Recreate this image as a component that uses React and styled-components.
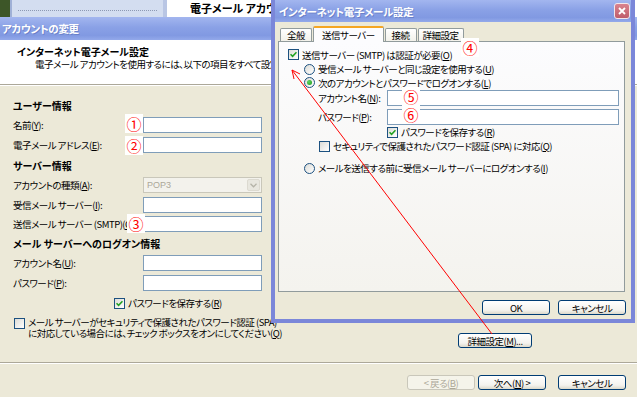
import React from "react";
import styled, { createGlobalStyle, css } from "styled-components";

const GlobalStyle = createGlobalStyle`
  html, body { margin: 0; padding: 0; }
  body {
    width: 637px;
    height: 397px;
    overflow: hidden;
    background: #3d5628;
    font-family: "Noto Sans CJK JP", "Liberation Sans", sans-serif;
    font-size: 9.5px;
    letter-spacing: -0.5px;
    font-feature-settings: "palt";
    color: #000;
  }
`;

const Desktop = styled.div`
  position: relative;
  width: 637px;
  height: 397px;
  overflow: hidden;
`;

/* window behind everything (top strip) */
const BackWindow = styled.div`
  position: absolute;
  left: 10px;
  top: 0;
  width: 627px;
  height: 30px;
  display: flex;
  background: #fff;
`;
const NavPane = styled.div`
  width: 157px;
  border-left: 2px solid #9fb0d6;
  border-right: 4px solid #b9c6e4;
  background: #d3ddf0;
  padding: 10px 6px 0 6px;
  box-sizing: border-box;
`;
const Dotted = styled.div`
  border-top: 1px dotted #8d99b3;
`;
const BackHeading = styled.div`
  padding: 2px 0 0 23px;
  font-weight: bold;
  font-size: 11px;
  letter-spacing: 0;
  line-height: 13px;
`;

/* main wizard */
const MainWindow = styled.div`
  position: absolute;
  left: 0;
  top: 17px;
  width: 637px;
  height: 380px;
  background: #ece9d8;
  display: flex;
  flex-direction: column;
`;
const TitleBar = styled.div`
  flex: none;
  height: ${p => p.$h}px;
  display: flex;
  align-items: center;
  justify-content: space-between;
  padding: 0 1px 0 ${p => p.$pl}px;
  box-sizing: border-box;
  background: linear-gradient(#a3b6ef, #8aa1e6 45%, #8199e2 80%, #93a9ea);
  color: #fff;
  font-weight: bold;
  font-size: 10.5px;
  letter-spacing: -0.3px;
  text-shadow: 1px 1px 0 rgba(60, 80, 150, 0.35);
`;
const WizardHeader = styled.div`
  flex: none;
  height: 45px;
  background: #fff;
  border-bottom: 1px solid #aca899;
  box-shadow: 0 1px 0 #fff;
  padding: 5px 0 0 17px;
  box-sizing: border-box;
`;
const HeaderTitle = styled.div`
  font-weight: bold;
  font-size: 10px;
  letter-spacing: 0;
  line-height: 13px;
`;
const HeaderText = styled.div`
  padding-left: 18px;
  line-height: 12px;
  white-space: nowrap;
`;
const WizardBody = styled.div`
  flex: 1;
  display: flex;
  margin-top: 1px;
`;
const FormCol = styled.div`
  width: 266px;
  flex: none;
  padding: 9px 0 0 13px;
  box-sizing: border-box;
  display: grid;
  grid-template-columns: 130px 119px;
  align-content: start;
`;
const Heading = styled.div`
  grid-column: 1 / 3;
  height: 20px;
  display: flex;
  align-items: center;
  font-weight: bold;
  font-size: 10px;
  letter-spacing: 0;
`;
const Label = styled.div`
  height: ${p => p.$h || 20}px;
  display: flex;
  align-items: center;
  white-space: nowrap;
`;
const Cell = styled.div`
  height: ${p => p.$h || 20}px;
  display: flex;
  align-items: center;
`;
const TextBox = styled.div`
  width: ${p => p.$w}px;
  height: 16px;
  box-sizing: border-box;
  border: 1px solid #7f9db9;
  background: #fff;
`;
const Combo = styled.div`
  width: 119px;
  height: 16px;
  box-sizing: border-box;
  border: 1px solid #c9c7ba;
  background: #f3f2ec;
  color: #aca899;
  display: flex;
  align-items: center;
  justify-content: space-between;
  padding-left: 3px;
  font-family: "Liberation Sans", sans-serif;
  font-size: 9px;
  letter-spacing: 0;
`;
const ComboButton = styled.div`
  width: 13px;
  height: 12px;
  margin-right: 1px;
  border-radius: 2px;
  background: #e8e7df;
  border: 1px solid #dcdad0;
  box-sizing: border-box;
  display: flex;
  align-items: center;
  justify-content: center;
`;
const CheckRow = styled.div`
  grid-column: 1 / 3;
  height: ${p => p.$h || 20}px;
  display: flex;
  align-items: ${p => p.$top ? "flex-start" : "center"};
  gap: 3px;
  padding-left: ${p => p.$indent || 0}px;
  margin-top: ${p => p.$mt || 0}px;
  white-space: nowrap;
`;
const TwoLines = styled.div`
  line-height: 11px;
  margin-top: -1px;
`;
const SideCol = styled.div`
  flex: 1;
  display: flex;
  flex-direction: column;
  justify-content: flex-end;
  align-items: flex-end;
  padding: 0 105px 14px 0;
`;
const Separator = styled.div`
  flex: none;
  border-top: 1px solid #aca899;
  border-bottom: 1px solid #fff;
`;
const Footer = styled.div`
  flex: none;
  height: 33px;
  box-sizing: border-box;
  display: flex;
  justify-content: flex-end;
  align-items: flex-start;
  gap: 3px;
  padding: 11px 11px 0 0;
`;
const Button = styled.div`
  width: ${p => p.$w || 68}px;
  height: 15px;
  box-sizing: border-box;
  border: 1px solid #003c74;
  border-radius: 3px;
  background: linear-gradient(#fff, #f4f3ee 70%, #dcd9cb);
  display: flex;
  align-items: center;
  justify-content: center;
  white-space: nowrap;
  margin-left: ${p => p.$gap || 0}px;
  ${p => p.$disabled && css`
    border-color: #c9c7ba;
    background: #f5f4ea;
    color: #aca899;
  `}
`;

/* overlay properties dialog */
const Dialog = styled.div`
  position: absolute;
  left: 271px;
  top: 0;
  width: 364px;
  height: 323px;
  box-sizing: border-box;
  border: 4px solid #7b87d9;
  border-top: none;
  background: #ece9d8;
  display: flex;
  flex-direction: column;
`;
const CloseButton = styled.div`
  width: 16px;
  height: 16px;
  box-sizing: border-box;
  border: 1px solid #f2e6ea;
  border-radius: 3px;
  background: linear-gradient(#d9828e, #bf5d6b);
  display: flex;
  align-items: center;
  justify-content: center;
`;
const DialogBody = styled.div`
  flex: 1;
  padding: 4px 6px 4px 3px;
  display: flex;
  flex-direction: column;
`;
const TabStrip = styled.div`
  height: 15px;
  display: flex;
  align-items: flex-end;
  padding-left: 2px;
  position: relative;
  z-index: 1;
`;
const Tab = styled.div`
  min-width: 32px;
  height: ${p => p.$active ? 16 : 13}px;
  box-sizing: border-box;
  padding: 0 ${p => p.$active ? 8 : 4}px;
  margin-right: 1px;
  display: flex;
  align-items: center;
  justify-content: center;
  border: 1px solid #919b9c;
  border-bottom: none;
  border-radius: 2px 2px 0 0;
  background: linear-gradient(#fff, #f2f1ea);
  white-space: nowrap;
  ${p => p.$active && css`
    margin-bottom: -1px;
    border-top: 2px solid #f5a623;
    background: #fcfcfe;
  `}
`;
const TabPanel = styled.div`
  height: 251px;
  box-sizing: border-box;
  border: 1px solid #919b9c;
  background: linear-gradient(#fcfcfe, #f4f3ee);
  padding: 5px 0 0 9px;
  display: flex;
  flex-direction: column;
`;
const PanelRow = styled.div`
  height: ${p => p.$h}px;
  display: flex;
  align-items: center;
  gap: 3px;
  padding-left: ${p => p.$indent || 0}px;
  margin-top: ${p => p.$mt || 0}px;
  white-space: nowrap;
`;
const PanelLabel = styled.div`
  width: 69px;
  flex: none;
  margin-right: -3px;
`;
const DialogButtons = styled.div`
  display: flex;
  justify-content: flex-end;
  gap: 8px;
  margin: 8px -1px 0 0;
`;

/* controls */
const Box = styled.span`
  width: 11px;
  height: 11px;
  flex: none;
  box-sizing: border-box;
  border: 1px solid #1c5180;
  background: linear-gradient(135deg, #dcdcd7, #fff);
  display: inline-flex;
  align-items: center;
  justify-content: center;
  ${p => p.$round && css`border-radius: 50%;`}
`;
const Dot = styled.span`
  width: 5px;
  height: 5px;
  border-radius: 50%;
  background: radial-gradient(circle at 35% 35%, #5ed35e, #1c9b1c);
`;
const Mn = styled.span`
  text-decoration: underline;
`;

const Note = styled.span`
  position: absolute;
  left: ${p => p.$x}px;
  top: ${p => p.$y}px;
  width: 18px;
  height: 19px;
  background: #fff;
  color: #f00;
  font-size: 15px;
  letter-spacing: 0;
  line-height: 19px;
  text-align: center;
  z-index: 5;
`;
const Arrow = styled.svg`
  position: absolute;
  left: 0;
  top: 0;
  z-index: 6;
  pointer-events: none;
`;

const Check = () => (
  <svg width="7" height="7" viewBox="0 0 7 7">
    <path d="M0.5 3.2 L2.6 5.4 L6.5 1.2" fill="none" stroke="#21a121" strokeWidth="1.6" />
  </svg>
);
const CheckBox = ({ checked }) => <Box>{checked && <Check />}</Box>;
const Radio = ({ checked }) => <Box $round>{checked && <Dot />}</Box>;

export default function App() {
  return (
    <Desktop>
      <GlobalStyle />
      <BackWindow>
        <NavPane><Dotted /></NavPane>
        <BackHeading>電子メール アカウント</BackHeading>
      </BackWindow>

      <MainWindow>
        <TitleBar $h={23} $pl={2}>アカウントの変更</TitleBar>
        <WizardHeader>
          <HeaderTitle>インターネット電子メール設定</HeaderTitle>
          <HeaderText>電子メール アカウントを使用するには、以下の項目をすべて設定してください。</HeaderText>
        </WizardHeader>
        <WizardBody>
          <FormCol>
            <Heading>ユーザー情報</Heading>
            <Label>名前(<Mn>Y</Mn>):</Label>
            <Cell><TextBox $w={119} /></Cell>
            <Label>電子メール アドレス(<Mn>E</Mn>):</Label>
            <Cell><TextBox $w={119} /></Cell>
            <Heading>サーバー情報</Heading>
            <Label>アカウントの種類(<Mn>A</Mn>):</Label>
            <Cell>
              <Combo>
                POP3
                <ComboButton>
                  <svg width="7" height="5" viewBox="0 0 7 5">
                    <path d="M0.5 0.8 L3.5 3.8 L6.5 0.8" fill="none" stroke="#b5b3a8" strokeWidth="1.3" />
                  </svg>
                </ComboButton>
              </Combo>
            </Cell>
            <Label $h={19}>受信メール サーバー(<Mn>I</Mn>):</Label>
            <Cell $h={19}><TextBox $w={119} /></Cell>
            <Label $h={19}>送信メール サーバー (SMTP)(<Mn>O</Mn>):</Label>
            <Cell $h={19}><TextBox $w={119} /></Cell>
            <Heading>メール サーバーへのログオン情報</Heading>
            <Label>アカウント名(<Mn>U</Mn>):</Label>
            <Cell><TextBox $w={119} /></Cell>
            <Label>パスワード(<Mn>P</Mn>):</Label>
            <Cell><TextBox $w={119} /></Cell>
            <CheckRow $indent={101}>
              <CheckBox checked />
              <span>パスワードを保存する(<Mn>R</Mn>)</span>
            </CheckRow>
            <CheckRow $h={24} $top $indent={1} $mt={5}>
              <CheckBox />
              <TwoLines>
                メール サーバーがセキュリティで保護されたパスワード認証 (SPA)<br />
                に対応している場合には、チェック ボックスをオンにしてください(<Mn>Q</Mn>)
              </TwoLines>
            </CheckRow>
          </FormCol>
          <SideCol>
            <Button $w={74}>詳細設定(<Mn>M</Mn>)...</Button>
          </SideCol>
        </WizardBody>
        <Separator />
        <Footer>
          <Button $disabled>&lt; 戻る(<Mn>B</Mn>)</Button>
          <Button>次へ(<Mn>N</Mn>) &gt;</Button>
          <Button $gap={9}>キャンセル</Button>
        </Footer>
      </MainWindow>

      <Dialog>
        <TitleBar $h={22} $pl={4}>
          インターネット電子メール設定
          <CloseButton>
            <svg width="8" height="8" viewBox="0 0 8 8">
              <path d="M1 1 L7 7 M7 1 L1 7" stroke="#fff" strokeWidth="1.8" />
            </svg>
          </CloseButton>
        </TitleBar>
        <DialogBody>
          <TabStrip>
            <Tab>全般</Tab>
            <Tab $active>送信サーバー</Tab>
            <Tab>接続</Tab>
            <Tab>詳細設定</Tab>
          </TabStrip>
          <TabPanel>
            <PanelRow $h={15}>
              <CheckBox checked />
              <span>送信サーバー (SMTP) は認証が必要(<Mn>O</Mn>)</span>
            </PanelRow>
            <PanelRow $h={14} $indent={16}>
              <Radio />
              <span>受信メール サーバーと同じ設定を使用する(<Mn>U</Mn>)</span>
            </PanelRow>
            <PanelRow $h={13} $indent={16}>
              <Radio checked />
              <span>次のアカウントとパスワードでログオンする(<Mn>L</Mn>)</span>
            </PanelRow>
            <PanelRow $h={18} $indent={30}>
              <PanelLabel>アカウント名(<Mn>N</Mn>):</PanelLabel>
              <TextBox $w={232} />
            </PanelRow>
            <PanelRow $h={19} $indent={30}>
              <PanelLabel>パスワード(<Mn>P</Mn>):</PanelLabel>
              <TextBox $w={232} />
            </PanelRow>
            <PanelRow $h={12} $indent={99}>
              <CheckBox checked />
              <span>パスワードを保存する(<Mn>R</Mn>)</span>
            </PanelRow>
            <PanelRow $h={16} $indent={31}>
              <CheckBox />
              <span>セキュリティで保護されたパスワード認証 (SPA) に対応(<Mn>Q</Mn>)</span>
            </PanelRow>
            <PanelRow $h={14} $indent={16} $mt={7}>
              <Radio />
              <span>メールを送信する前に受信メール サーバーにログオンする(<Mn>I</Mn>)</span>
            </PanelRow>
          </TabPanel>
          <DialogButtons>
            <Button>OK</Button>
            <Button>キャンセル</Button>
          </DialogButtons>
        </DialogBody>
      </Dialog>

      <Note $x={125} $y={114}>①</Note>
      <Note $x={125} $y={136}>②</Note>
      <Note $x={127} $y={214}>③</Note>
      <Note $x={461} $y={38}>④</Note>
      <Note $x={402} $y={87}>⑤</Note>
      <Note $x={402} $y={105}>⑥</Note>

      <Arrow width="637" height="397" viewBox="0 0 637 397">
        <path d="M492 334 L292 70 M292 70 L300 74 M292 70 L294 79" fill="none" stroke="#f00" strokeWidth="1" />
      </Arrow>
    </Desktop>
  );
}
